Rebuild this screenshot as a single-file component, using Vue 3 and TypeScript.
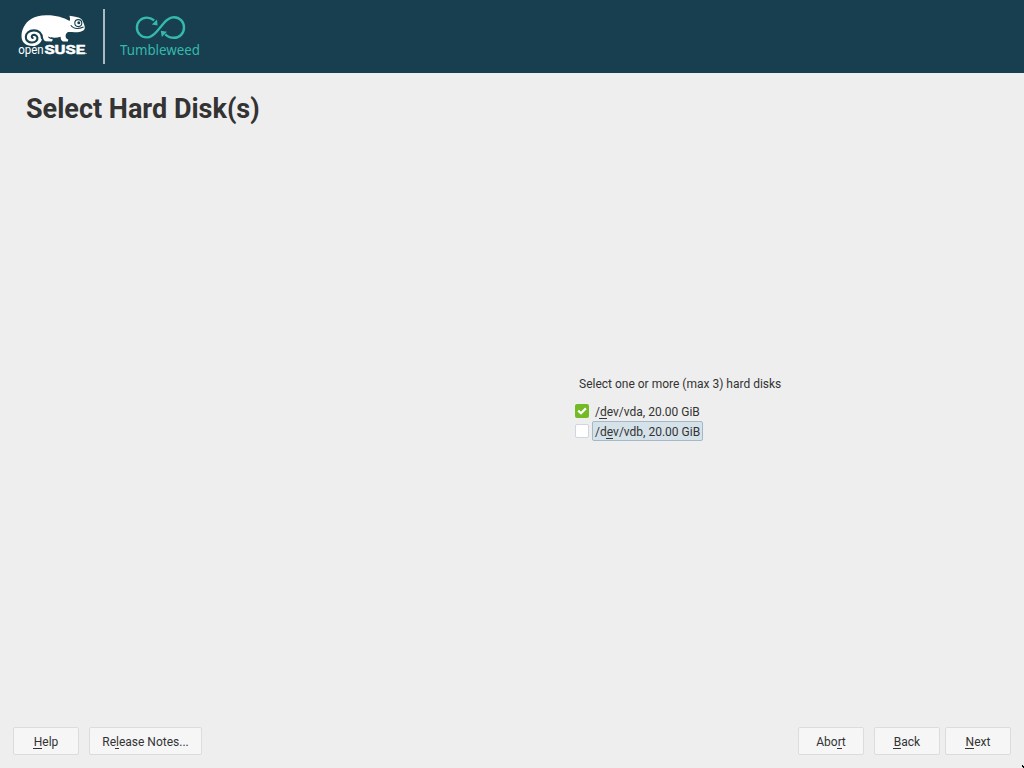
<script setup lang="ts">
import { ref } from 'vue'

interface Disk {
  pre: string
  key: string
  post: string
  checked: boolean
  focused: boolean
}
interface Action {
  pre: string
  key: string
  post: string
  kind: string
}

const disks = ref<Disk[]>([
  { pre: '/', key: 'd', post: 'ev/vda, 20.00 GiB', checked: true, focused: false },
  { pre: '/d', key: 'e', post: 'v/vdb, 20.00 GiB', checked: false, focused: true },
])
const actions: Action[] = [
  { pre: '', key: 'H', post: 'elp', kind: 'help' },
  { pre: 'Re', key: 'l', post: 'ease Notes...', kind: 'notes' },
  { pre: 'Abo', key: 'r', post: 't', kind: 'abort' },
  { pre: '', key: 'B', post: 'ack', kind: 'back' },
  { pre: '', key: 'N', post: 'ext', kind: 'next' },
]
</script>

<template>
  <div class="installer">
    <header class="banner">
      <svg class="brand" width="220" height="73" viewBox="0 0 220 73">
        <path
          fill="#fff"
          d="M21.5 36.5C21.5 33 22 30.5 23.5 27.5C27 20 34 15.6 46 15.2C56 15 63 17.2 69.6 21C70.4 19.6 70 17.6 69.4 15.8C72.6 16.2 75.5 16.6 78.5 17.4C81 18 82.5 20 83.3 22.5C84.3 24.3 84.9 26.5 84.8 28.3C84 31.8 78.5 32.6 74.5 32.2C71.5 32 69 31.6 67.6 32.2C66.2 33.2 65.6 34.4 65.6 36C65.6 37.8 66.6 38.9 68.2 39.4L67.8 41.6L63 41.4C60.8 40.4 60.8 38.7 60.6 36.8C56.5 38.3 51 38 48 36.6C48 37.7 49 38.4 50.2 38.8L53 39.4L51.8 41.4L45.6 41.2C43.6 40.4 43 38 42.6 35.4C42.6 41.4 38.8 46 32.4 46C25.6 46 21.5 42 21.5 36.5Z"
        />
        <path
          fill="none" stroke="#173f4f" stroke-width="2.1" stroke-linecap="round"
          d="M42 38.4C42.2 33.6 38.6 30.4 34 30.4C29.2 30.4 25.8 33.2 25.8 37C25.8 40.6 28.6 42.7 32 42.5C35.6 42.3 37.8 40.2 37.4 37.7C37 35.4 34.8 34.5 33 35.1C31.4 35.7 31.4 37.6 32.7 38"
        />
        <circle cx="78.3" cy="23.1" r="3.5" fill="#fff" stroke="#173f4f" stroke-width="1.1" />
        <circle cx="78.8" cy="22.8" r="1.5" fill="#173f4f" />
        <path d="M70.8 25.3C73.3 28.9 78 29.3 83.6 27" fill="none" stroke="#173f4f" stroke-width="1.1" />
        <text class="wordmark open" x="18.2" y="54" textLength="25.4" lengthAdjust="spacingAndGlyphs">open</text>
        <text class="wordmark suse" x="44.4" y="54" textLength="40.6" lengthAdjust="spacingAndGlyphs">SUSE</text>
        <circle cx="86" cy="53.4" r=".6" fill="#fff" />
        <rect x="103" y="9" width="2" height="55" fill="#a9bac0" />
        <path
          fill="none" stroke="#35b9ab" stroke-width="2.4"
          d="M154.2 20.4C151.8 18.4 149.6 17.6 146.8 17.6C141.2 17.6 136.9 22 136.9 27.5C136.9 33 141.2 37.4 146.8 37.4C151 37.4 153.8 35 156.8 31.5L163.5 23.5C166.5 19.8 169.4 17.2 174 17.2C179.6 17.2 184 21.7 184 27.5C184 33.3 179.6 37.8 174 37.8C170.6 37.8 167.5 36.6 165.3 34.2"
        />
        <path d="M157.6 25.4L151.8 24.6L157 19.6ZM160.8 30.8L167 31.7L161.8 36.9Z" fill="#35b9ab" />
        <text class="product" x="120" y="55.2" textLength="80" lengthAdjust="spacingAndGlyphs">Tumbleweed</text>
      </svg>
    </header>

    <h1>Select Hard Disk(s)</h1>

    <main>
      <p class="prompt">Select one or more (max 3) hard disks</p>
      <label v-for="disk in disks" :key="disk.post" class="disk">
        <input v-model="disk.checked" type="checkbox" />
        <span class="box" :class="{ on: disk.checked }">
          <svg v-if="disk.checked" width="14" height="14" viewBox="0 0 14 14">
            <path d="M3.2 6.6L6 9.2L10.9 4.4" fill="none" stroke="#fff" stroke-width="2.2" />
          </svg>
        </span>
        <span class="name" :class="{ focused: disk.focused }">{{ disk.pre }}<u>{{ disk.key }}</u>{{ disk.post }}</span>
      </label>
    </main>

    <footer>
      <button v-for="a in actions" :key="a.kind" type="button" :class="a.kind"><span>{{ a.pre }}<u>{{ a.key }}</u>{{ a.post }}</span></button>
    </footer>
    <svg class="pointer" width="2" height="3" viewBox="0 0 2 3"><path d="M0 0H1V1H2V3H1V2H0Z" fill="#000" /></svg>
  </div>
</template>

<style>
body {
  overflow: hidden;
}
</style>

<style scoped>
.installer {
  position: relative;
  display: flex;
  flex-direction: column;
  box-sizing: border-box;
  width: 1024px;
  height: 768px;
  background: #eee;
  color: #333;
  font: 12px/16px Roboto, sans-serif;
}
.banner {
  flex: none;
  height: 73px;
  background: #173f4f;
}
.brand {
  display: block;
}
.wordmark {
  fill: #fff;
}
.open {
  font: 12px Roboto, sans-serif;
}
.suse {
  font: 700 13px Roboto, sans-serif;
  stroke: #fff;
  stroke-width: 0.5px;
}
.product {
  font: 13.8px 'Noto Sans', sans-serif;
  fill: #35b9ab;
}
h1 {
  margin: 20px 0 0 26px;
  font-size: 27px;
  line-height: 32px;
  font-weight: 700;
}
main {
  flex: 1;
  padding: 251px 0 0 575px;
}
.prompt {
  margin: 0 0 9px 4px;
}
.disk {
  display: flex;
  align-items: center;
  height: 20px;
}
.disk input {
  display: none;
}
.box {
  box-sizing: border-box;
  width: 14px;
  height: 14px;
  margin-right: 3px;
  border: 1px solid #cdd6e4;
  border-radius: 2px;
  background: #fff;
}
.box.on {
  border: 0;
  background: #73ba25;
}
.box svg {
  display: block;
}
.name {
  box-sizing: border-box;
  height: 20px;
  padding: 2px;
  border: 1px solid transparent;
  border-radius: 2px;
  line-height: 16px;
}
.name.focused {
  border-color: #a3b9c8;
  background: #d6e2e9;
}
u {
  position: relative;
  text-decoration: none;
}
u::after {
  content: '';
  position: absolute;
  left: -0.6px;
  right: 0;
  bottom: 0;
  height: 1px;
  background: #333;
}
footer {
  display: flex;
  padding: 0 13px 13px;
}
button {
  box-sizing: border-box;
  width: 66px;
  height: 28px;
  padding: 1px 0 0;
  border: 1px solid #dcdcdc;
  border-radius: 2px;
  background: #f6f6f6;
  color: #333;
  font: inherit;
}
.notes {
  width: 113px;
  margin-left: 10px;
}
.abort {
  margin-left: auto;
}
.back {
  margin-left: 10px;
}
.next {
  margin-left: 5px;
}
.pointer {
  position: absolute;
  right: 0;
  bottom: 0;
}
</style>
